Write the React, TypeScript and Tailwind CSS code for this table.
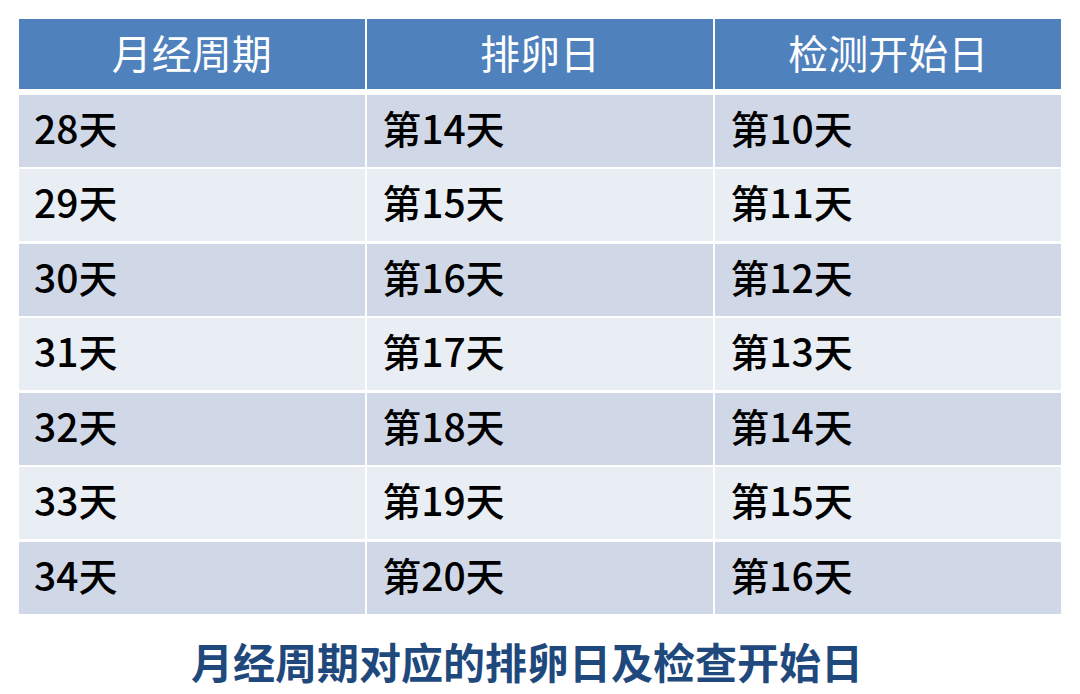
const rows = [
  ["28天", "第14天", "第10天"],
  ["29天", "第15天", "第11天"],
  ["30天", "第16天", "第12天"],
  ["31天", "第17天", "第13天"],
  ["32天", "第18天", "第14天"],
  ["33天", "第19天", "第15天"],
  ["34天", "第20天", "第16天"],
];

const headers = ["月经周期", "排卵日", "检测开始日"];

export default function App() {
  return (
    <div
      className="w-[1080px] h-[694px] bg-white px-[19px] pt-[19px]"
      style={{ fontFamily: '"Noto Sans CJK SC", "Noto Sans", sans-serif' }}
    >
      <div className="grid grid-cols-3 gap-x-[2.5px]">
        {headers.map((h) => (
          <div
            key={h}
            className="h-[70px] pb-[4px] bg-[#4f81bd] flex items-center justify-center text-white text-[40px] font-normal leading-none"
          >
            {h}
          </div>
        ))}
      </div>
      <div className="mt-[5.5px] grid grid-cols-3 gap-x-[2.5px] gap-y-[2.5px]">
        {rows.map((r, i) =>
          r.map((c, j) => (
            <div
              key={`${i}-${j}`}
              className={`h-[72px] pb-[7px] flex items-center pl-[15px] text-black text-[39px] font-medium leading-none ${
                i % 2 === 0 ? "bg-[#d0d8e8]" : "bg-[#e9edf4]"
              }`}
            >
              {c}
            </div>
          ))
        )}
      </div>
      <div className="mt-[22px] flex justify-center pr-[26px] text-[42px] font-bold leading-[50px] text-[#1f497d]">
        月经周期对应的排卵日及检查开始日
      </div>
    </div>
  );
}
